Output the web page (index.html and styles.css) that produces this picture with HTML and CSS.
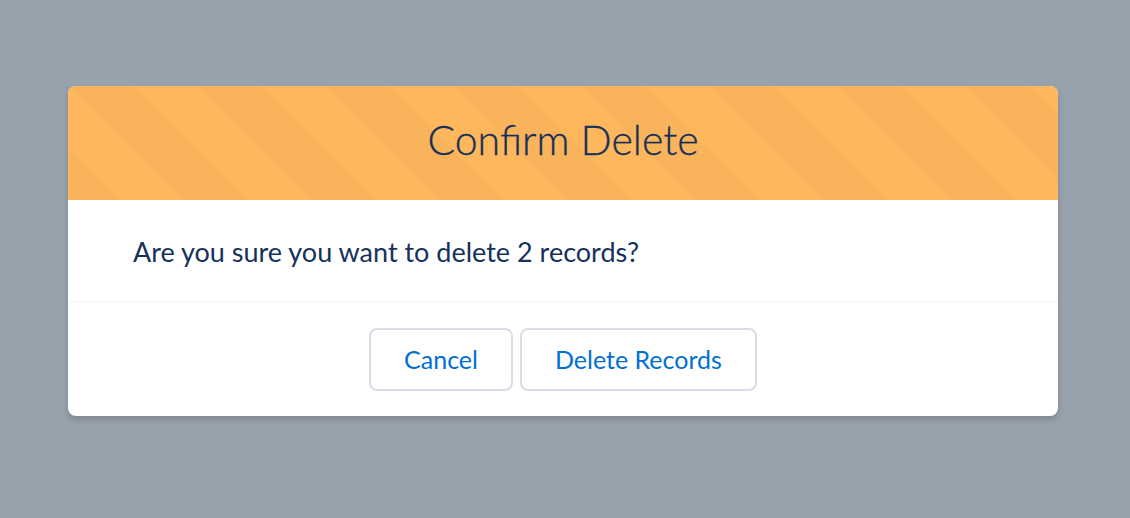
FILE: index.html
```html
<!DOCTYPE html>
<html lang="en">
<head>
<meta charset="utf-8">
<title>Confirm Delete</title>
<link rel="stylesheet" href="styles.css">
</head>
<body>
<div class="backdrop">
  <section class="modal" role="dialog" aria-labelledby="modal-title">
    <header class="modal-header">
      <h2 id="modal-title" class="modal-title">Confirm Delete</h2>
    </header>
    <div class="modal-content">
      <p>Are you sure you want to delete 2 records?</p>
    </div>
    <footer class="modal-footer">
      <button class="btn" type="button">Cancel</button>
      <button class="btn" type="button">Delete Records</button>
    </footer>
  </section>
</div>
</body>
</html>
```
FILE: styles.css
```css
* { box-sizing: border-box; }
html, body { margin: 0; padding: 0; }
body {
  width: 1130px;
  height: 518px;
  overflow: hidden;
  font-family: "Lato", "Open Sans", sans-serif;
  color: #16325c;
}
.backdrop {
  height: 100%;
  background: #98a2ad;
  display: flex;
  justify-content: center;
  align-items: flex-start;
  padding: 86px 4px 0 0;
}
.modal {
  width: 990px;
  background: #fff;
  border-radius: 8px;
  box-shadow: 0 4px 6px rgba(0, 0, 0, 0.16);
  overflow: hidden;
}
.modal-header {
  background-color: #ffb75d;
  background-image: linear-gradient(45deg, rgba(0,0,0,.025) 25%, transparent 25%, transparent 50%, rgba(0,0,0,.025) 50%, rgba(0,0,0,.025) 75%, transparent 75%, transparent);
  background-size: 128px 128px;
  padding: 29px 32px 35px;
  text-align: center;
}
.modal-title {
  margin: 0;
  font-weight: 300;
  font-size: 41px;
  line-height: 50px;
  color: #14305a;
  -webkit-text-stroke: 0.3px #14305a;
}
.modal-content {
  padding: 32px 65px 30px;
}
.modal-content p {
  margin: 0;
  font-size: 27px;
  line-height: 39px;
}
.modal-footer {
  border-top: 2px solid #f8f8f8;
  padding: 25px 32px 25px;
  display: flex;
  justify-content: center;
  gap: 7px;
}
.btn {
  font-family: inherit;
  font-size: 25px;
  line-height: 59px;
  height: 63px;
  padding: 0 33px;
  background: #fff;
  border: 2px solid #d8dde6;
  border-radius: 8px;
  color: #0070d2;
  cursor: pointer;
}
```
